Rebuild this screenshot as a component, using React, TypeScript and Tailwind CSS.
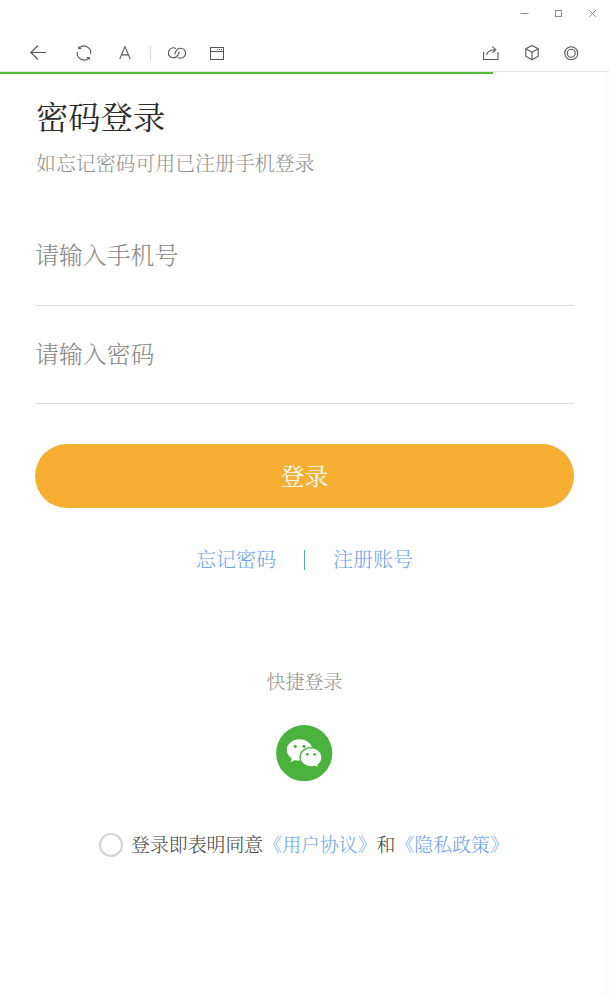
import { useState } from "react";

interface IField {
  name: string;
  type: string;
  placeholder: string;
  className: string;
}

const fields: IField[] = [
  {
    name: "phone",
    type: "text",
    placeholder: "请输入手机号",
    className: "mt-[27px] h-[101px] pb-[3px]",
  },
  {
    name: "password",
    type: "password",
    placeholder: "请输入密码",
    className: "h-[98px] pb-[4px]",
  },
];

const WindowButtons = () => (
  <div className="h-[26px] flex justify-end items-center pr-[12px] gap-[25px] text-[#8c8c8c]">
    <svg width="9" height="9" viewBox="0 0 9 9" fill="none" stroke="currentColor">
      <path d="M0.5 4.5H8.5" />
    </svg>
    <svg width="9" height="9" viewBox="0 0 9 9" fill="none" stroke="currentColor">
      <rect x="1.5" y="1.5" width="6" height="6" />
    </svg>
    <svg width="9" height="9" viewBox="0 0 9 9" fill="none" stroke="currentColor">
      <path d="M1.2 1.2L7.8 7.8M7.8 1.2L1.2 7.8" />
    </svg>
  </div>
);

const Toolbar = () => (
  <div className="h-[45px] flex items-center justify-between pt-[9px] pl-[30px] pr-[30px] text-[#555555]">
    <div className="flex items-center">
      <svg width="16" height="16" viewBox="0 0 16 16" fill="none" stroke="currentColor" strokeWidth="1.1">
        <path d="M16 7.5H0.8M8 0.5L0.8 7.5L8 14.5" />
      </svg>
      <svg className="ml-[30px]" width="16" height="16" viewBox="0 0 16 16" fill="none" stroke="currentColor" strokeWidth="1.1">
        <path d="M2.8 3.4A6.8 6.8 0 0 1 14.6 9.2M13.2 12.6A6.8 6.8 0 0 1 1.4 6.8" />
        <path d="M2.8 1.2V3.5H5.2M13.2 14.8V12.5H10.8" />
      </svg>
      <svg className="ml-[27px]" width="12" height="14" viewBox="0 0 12 14" fill="none" stroke="currentColor" strokeWidth="1.1">
        <path d="M0.7 13.1L6 0.6L11.3 13.1M2.5 8.9H9.5" />
      </svg>
      <span className="ml-[19px] w-px h-[15px] bg-[#d6d6d6]" />
      <svg className="ml-[17px]" width="18" height="12" viewBox="0 0 18 12" fill="none" stroke="currentColor" strokeWidth="1.1">
        <path d="M8 1.6Q6.8 0.8 5.4 0.8A5 5 0 0 0 5.4 10.8C8 10.8 9.2 9.6 10 8L11.4 4.6" />
        <path d="M10 10.4Q11.2 11.2 12.6 11.2A5 5 0 0 0 12.6 1.2C10 1.2 8.8 2.4 8 4L6.6 7.4" />
      </svg>
      <svg className="ml-[24px]" width="14" height="13" viewBox="0 0 14 13" fill="none" stroke="currentColor">
        <rect x="0.5" y="0.5" width="13" height="12" />
        <path d="M0.5 4.5H13.5" />
        <path d="M7 2.5H12" strokeDasharray="1 1" />
      </svg>
    </div>
    <div className="flex items-center">
      <svg width="16" height="15" viewBox="0 0 16 15" fill="none" stroke="currentColor" strokeWidth="1.1">
        <path d="M0.6 6V13.5H15V6" />
        <path d="M3.6 9.1C4.2 5.9 6.5 3.7 12.6 3.7M9.4 0.6L12.8 3.7L9.4 6.8" />
      </svg>
      <svg className="ml-[26px]" width="14" height="16" viewBox="0 0 14 16" fill="none" stroke="currentColor" strokeWidth="1.1" strokeLinejoin="round">
        <path d="M7 0.6L13.2 3.8V11.2L7 14.7L0.8 11.2V3.8Z" />
        <path d="M0.8 3.8L7 7.2L13.2 3.8M7 7.2V14.7" />
      </svg>
      <svg className="ml-[25px]" width="15" height="15" viewBox="0 0 15 15" fill="none" stroke="currentColor" strokeWidth="1.1">
        <circle cx="7.2" cy="7.2" r="6.5" />
        <circle cx="7.2" cy="7.2" r="4" />
      </svg>
    </div>
  </div>
);

const WechatIcon = () => (
  <svg width="57" height="57" viewBox="0 0 57 57">
    <circle cx="28.2" cy="28.2" r="28.1" fill="#4bb33d" />
    <path
      d="M23.6 14.3C16.6 14.3 10.8 19.1 10.8 25.1C10.8 28.6 12.6 31.4 15.8 33.4L14.4 37.2L19.2 34.9C20.6 35.3 22 35.5 23.6 35.5C30.6 35.5 36.3 31 36.3 25.1C36.3 19.1 30.6 14.3 23.6 14.3Z"
      fill="#ffffff"
    />
    <path
      d="M35 22.6C28.8 22.6 24 26.9 24 32.2C24 37.6 28.8 41.9 35 41.9C36.3 41.9 37.6 41.7 38.8 41.3L42.9 43.3L41.9 40C44.4 38.2 46 35.4 46 32.2C46 26.9 41.2 22.6 35 22.6Z"
      fill="#ffffff"
      stroke="#4bb33d"
      strokeWidth="1.4"
    />
    <g fill="#4bb33d">
      <circle cx="19.2" cy="21.3" r="1.6" />
      <circle cx="28" cy="21.3" r="1.6" />
      <circle cx="31.3" cy="29.3" r="1.4" />
      <circle cx="38.6" cy="29.3" r="1.4" />
    </g>
  </svg>
);

const App: React.FC = () => {
  const [agree, setAgree] = useState<boolean>(false);

  return (
    <div className="w-[609px] h-[995px] bg-white overflow-hidden font-['Noto_Serif_CJK_SC','Noto_Sans_CJK_SC',serif] font-light">
      <WindowButtons />
      <Toolbar />
      <div className="h-[3px] border-t border-[#e2e2e2] flex">
        <div className="w-[493px] h-[2px] bg-[#54bd38]" />
      </div>

      <div className="h-[921px] px-[35px] border-r-[5px] border-[#fcfcfc] flex flex-col">
        <div className="w-[539px] flex flex-col">
          <h1 className="mt-[18px] h-[46px] leading-[46px] pl-px text-[32.3px] font-normal text-[#2b2b2b]">
            密码登录
          </h1>
          <p className="mt-[10px] h-[30px] leading-[30px] pl-px text-[19.9px] text-[#8f8f8f]">
            如忘记密码可用已注册手机登录
          </p>

          {fields.map((field) => (
            <input
              key={field.name}
              type={field.type}
              placeholder={field.placeholder}
              className={`w-full border-b border-[#dddddd] outline-none text-[23.9px] placeholder:text-[#888888] ${field.className}`}
            />
          ))}

          <button className="mt-[40px] h-[64px] pb-[2px] rounded-full bg-[#f6ae33] text-white text-[24px] font-normal">
            登录
          </button>

          <div className="mt-[36px] h-[30px] flex justify-center items-center text-[20px] text-[#6ba4ea]">
            <a>忘记密码</a>
            <span className="mx-[28px] mt-px w-px h-[20px] bg-[#55a0dc]" />
            <a>注册账号</a>
          </div>

          <p className="mt-[93px] h-[28px] leading-[28px] text-center text-[19px] text-[#8f8f8f]">
            快捷登录
          </p>
          <div className="mt-[30px] flex justify-center">
            <WechatIcon />
          </div>

          <div className="mt-[48px] h-[30px] pl-[64px] flex items-center text-[18.9px] text-[#444444] whitespace-nowrap">
            <span
              onClick={() => setAgree(!agree)}
              className={`w-[24px] h-[24px] mr-[8px] rounded-full border-2 border-[#d2d2d2] ${
                agree && "bg-[#f6ae33]"
              }`}
            />
            <p className="pb-[2px]">
              登录即表明同意
              <a className="text-[#6ba4ea]">《用户协议》</a>和
              <a className="text-[#6ba4ea]">《隐私政策》</a>
            </p>
          </div>
        </div>
      </div>
    </div>
  );
};

export default App;
